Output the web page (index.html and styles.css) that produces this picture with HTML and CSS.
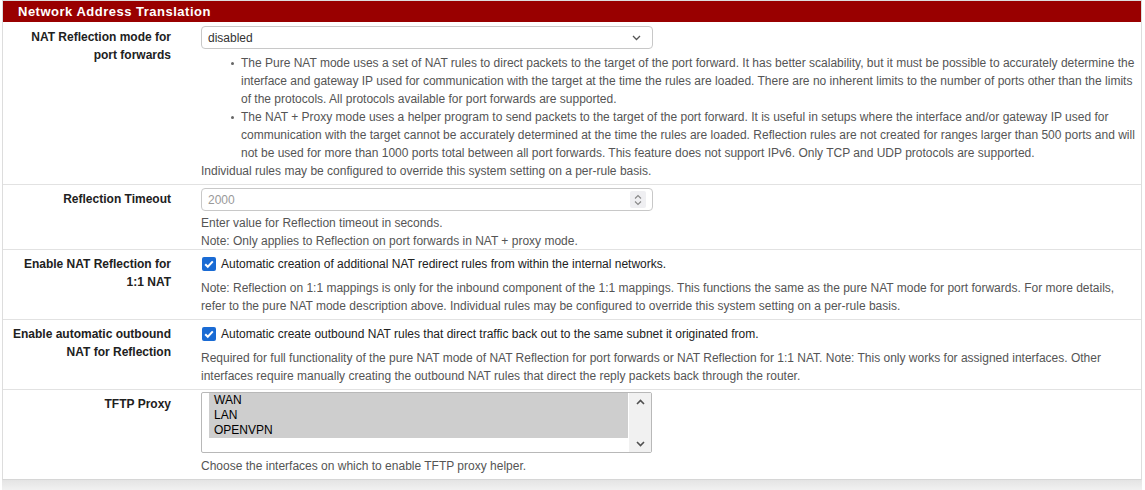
FILE: index.html
```html
<!DOCTYPE html>
<html lang="en">
<head>
    <meta charset="UTF-8">
    <title>Network Address Translation</title>
    <link rel="stylesheet" href="styles.css">
</head>
<body>
    <div class="panel">
        <div class="panel-heading">
            <h2 class="panel-title">Network Address Translation</h2>
        </div>
        <div class="panel-body">

            <div class="form-row">
                <div class="row-label">NAT Reflection mode for port forwards</div>
                <div class="row-content">
                    <div class="select-box">
                        <span>disabled</span>
                        <svg class="chevron" width="9" height="6" viewBox="0 0 9 6"><path d="M1 1l3.5 3.5L8 1" fill="none" stroke="#555" stroke-width="1.3"/></svg>
                    </div>
                    <div class="help first-help">
                        <ul>
                            <li>The Pure NAT mode uses a set of NAT rules to direct packets to the target of the port forward. It has better scalability, but it must be possible to accurately determine the interface and gateway IP used for communication with the target at the time the rules are loaded. There are no inherent limits to the number of ports other than the limits of the protocols. All protocols available for port forwards are supported.</li>
                            <li>The NAT + Proxy mode uses a helper program to send packets to the target of the port forward. It is useful in setups where the interface and/or gateway IP used for communication with the target cannot be accurately determined at the time the rules are loaded. Reflection rules are not created for ranges larger than 500 ports and will not be used for more than 1000 ports total between all port forwards. This feature does not support IPv6. Only TCP and UDP protocols are supported.</li>
                        </ul>
                        Individual rules may be configured to override this system setting on a per-rule basis.
                    </div>
                </div>
            </div>

            <div class="form-row">
                <div class="row-label">Reflection Timeout</div>
                <div class="row-content">
                    <div class="text-input">
                        <span class="placeholder">2000</span>
                        <span class="spinner">
                            <svg width="8" height="12" viewBox="0 0 8 12"><path d="M1 4.5l3-3 3 3M1 7.5l3 3 3-3" fill="none" stroke="#888" stroke-width="1.1"/></svg>
                        </span>
                    </div>
                    <div class="help tight">
                        Enter value for Reflection timeout in seconds.<br>
                        Note: Only applies to Reflection on port forwards in NAT + proxy mode.
                    </div>
                </div>
            </div>

            <div class="form-row">
                <div class="row-label">Enable NAT Reflection for 1:1 NAT</div>
                <div class="row-content">
                    <div class="check-line">
                        <span class="checkbox"><svg width="14" height="14" viewBox="0 0 14 14"><path d="M3.2 7.2l2.6 2.6 5-5.4" fill="none" stroke="#fff" stroke-width="2"/></svg></span>
                        Automatic creation of additional NAT redirect rules from within the internal networks.
                    </div>
                    <div class="help">
                        Note: Reflection on 1:1 mappings is only for the inbound component of the 1:1 mappings. This functions the same as the pure NAT mode for port forwards. For more details, refer to the pure NAT mode description above. Individual rules may be configured to override this system setting on a per-rule basis.
                    </div>
                </div>
            </div>

            <div class="form-row">
                <div class="row-label">Enable automatic outbound NAT for Reflection</div>
                <div class="row-content">
                    <div class="check-line">
                        <span class="checkbox"><svg width="14" height="14" viewBox="0 0 14 14"><path d="M3.2 7.2l2.6 2.6 5-5.4" fill="none" stroke="#fff" stroke-width="2"/></svg></span>
                        Automatic create outbound NAT rules that direct traffic back out to the same subnet it originated from.
                    </div>
                    <div class="help">
                        Required for full functionality of the pure NAT mode of NAT Reflection for port forwards or NAT Reflection for 1:1 NAT. Note: This only works for assigned interfaces. Other interfaces require manually creating the outbound NAT rules that direct the reply packets back through the router.
                    </div>
                </div>
            </div>

            <div class="form-row">
                <div class="row-label">TFTP Proxy</div>
                <div class="row-content">
                    <div class="list-box">
                        <div class="options">
                            <div class="option selected">WAN</div>
                            <div class="option selected">LAN</div>
                            <div class="option selected">OPENVPN</div>
                        </div>
                        <div class="scrollbar">
                            <svg width="9" height="6" viewBox="0 0 9 6"><path d="M1 5l3.5-3.5L8 5" fill="none" stroke="#505050" stroke-width="1.6"/></svg>
                            <svg width="9" height="6" viewBox="0 0 9 6"><path d="M1 1l3.5 3.5L8 1" fill="none" stroke="#505050" stroke-width="1.6"/></svg>
                        </div>
                    </div>
                    <div class="help">Choose the interfaces on which to enable TFTP proxy helper.</div>
                </div>
            </div>

        </div>
    </div>
    <div class="panel-shade"></div>
</body>
</html>
```

FILE: styles.css
```css
body {
    margin: 0;
    background: #fff;
    font-family: "Liberation Sans", Arial, sans-serif;
    font-size: 12px;
    color: #212121;
}
.panel {
    margin-left: 2px;
    width: 1138px;
    border: 1px solid #ddd;
    border-bottom-color: #d6d6d6;
    background: #fff;
}
.panel-heading {
    height: 21px;
    background-color: #990000;
    display: flex;
    align-items: center;
    padding-left: 15px;
}
.panel-title {
    margin: 0;
    color: #fff;
    font-size: 13px;
    font-weight: bold;
    letter-spacing: 0.5px;
}
.form-row {
    display: grid;
    grid-template-columns: 186px 1fr;
    border-top: 1px solid #e2e2e2;
    padding: 3px 0 4px;
}
.form-row:first-child {
    border-top: none;
    padding-top: 4px;
}
.row-label {
    font-weight: bold;
    line-height: 18px;
    text-align: right;
    padding: 2px 18px 0 10px;
}
.row-content {
    padding: 0 1px 0 12px;
}
.help {
    color: #555;
    line-height: 18px;
    margin-top: 4px;
}
.help.tight {
    margin-top: 3px;
    margin-bottom: -5px;
}
.help ul {
    margin: 0;
    padding-left: 40px;
    list-style: none;
}
.help li {
    position: relative;
}
.help li::before {
    content: "";
    position: absolute;
    left: -10px;
    top: 8px;
    width: 3px;
    height: 3px;
    border-radius: 50%;
    background: #666;
}
.first-help {
    margin-top: 5px;
}
.select-box {
    height: 21px;
    border: 1px solid #c8c8c8;
    border-radius: 4px;
    display: flex;
    align-items: center;
    justify-content: space-between;
    padding: 0 11px 0 6px;
    box-sizing: content-box;
    width: 433px;
    color: #333;
}
.text-input {
    height: 21px;
    border: 1px solid #c8c8c8;
    border-radius: 4px;
    display: flex;
    align-items: center;
    justify-content: space-between;
    padding: 0 6px 0 6px;
    box-sizing: content-box;
    width: 438px;
}
.placeholder {
    color: #999;
}
.spinner {
    width: 16px;
    height: 17px;
    background: #efeff2;
    display: flex;
    align-items: center;
    justify-content: center;
    border-radius: 2px;
}
.check-line {
    display: flex;
    align-items: center;
    line-height: 18px;
    padding: 2px 0;
    color: #212121;
}
.checkbox {
    width: 14px;
    height: 14px;
    border-radius: 2px;
    background: #1a6bd4;
    margin: 0 5px 0 1px;
    display: flex;
}
.list-box {
    width: 449px;
    height: 59px;
    border: 1px solid #b8b8b8;
    border-radius: 2px;
    display: flex;
    margin-top: -1px;
}
.options {
    flex: 1;
    padding: 0 0 0 7px;
    color: #000;
}
.option {
    line-height: 15px;
    padding-left: 5px;
}
.option.selected {
    background: #cecece;
}
.scrollbar {
    width: 22px;
    margin-left: 1px;
    background: #f1f1f1;
    display: flex;
    flex-direction: column;
    justify-content: space-between;
    align-items: center;
    padding: 6px 0 5px;
}
.panel-shade {
    margin-left: 2px;
    width: 1140px;
    height: 10px;
    background: linear-gradient(#e4e4e4, #f1f1f1);
    border-bottom: 1px solid #e0e0e0;
}
```
